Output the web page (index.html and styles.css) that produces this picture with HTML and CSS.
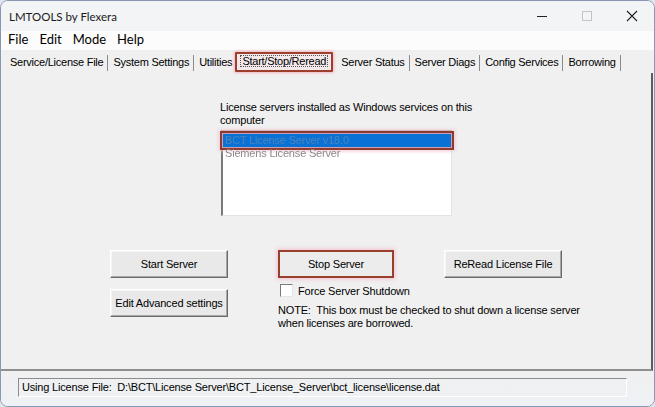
FILE: index.html
```html
<!DOCTYPE html>
<html>
<head>
<meta charset="utf-8">
<title>LMTOOLS by Flexera</title>
<link rel="stylesheet" href="styles.css">
</head>
<body>
<div class="window">
  <div class="titlebar">
    <span class="title">LMTOOLS by Flexera</span>
    <div class="controls">
      <span class="ctl"><svg width="12" height="12" viewBox="0 0 12 12"><path d="M1 6.5H11" stroke="#222" stroke-width="1"/></svg></span>
      <span class="ctl"><svg width="12" height="12" viewBox="0 0 12 12"><rect x="1.5" y="1.5" width="9" height="9" fill="none" stroke="#c4c4c4" stroke-width="1"/></svg></span>
      <span class="ctl"><svg width="12" height="12" viewBox="0 0 12 12"><path d="M1 1L11 11M11 1L1 11" stroke="#222" stroke-width="1.1"/></svg></span>
    </div>
  </div>
  <div class="menubar">
    <span class="menu">File</span>
    <span class="menu">Edit</span>
    <span class="menu">Mode</span>
    <span class="menu">Help</span>
  </div>
  <div class="tabs">
    <span class="tab">Service/License File</span>
    <span class="tab">System Settings</span>
    <span class="tab">Utilities</span>
    <span class="tab active"><span class="focus">Start/Stop/Reread</span></span>
    <span class="tab">Server Status</span>
    <span class="tab">Server Diags</span>
    <span class="tab">Config Services</span>
    <span class="tab">Borrowing</span>
  </div>
  <div class="pane">
    <div class="services">
      <div class="label">License servers installed as Windows services on this<br>computer</div>
      <div class="listbox">
        <div class="item selected"><span class="blur">BCT License Server v18.0</span></div>
        <div class="item"><span class="blur">Siemens License Server</span></div>
      </div>
    </div>
    <div class="actions">
      <button class="btn">Start Server</button>
      <button class="btn marked">Stop Server</button>
      <button class="btn">ReRead License File</button>
      <button class="btn second">Edit Advanced settings</button>
      <div class="shutdown">
        <label class="check"><span class="box"></span>Force Server Shutdown</label>
        <p class="note">NOTE:&nbsp; This box must be checked to shut down a license server<br>when licenses are borrowed.</p>
      </div>
    </div>
  </div>
  <div class="statusbar">
    <div class="status">Using License File:&nbsp; D:\BCT\License Server\BCT_License_Server\bct_license\license.dat</div>
  </div>
</div>
</body>
</html>
```
FILE: styles.css
```css
html, body {
  margin: 0;
  padding: 0;
  background: #dfe6ef;
}
.window {
  width: 653px;
  height: 405px;
  border: 1px solid #8898b4;
  border-radius: 8px;
  overflow: hidden;
  background: #f0f0f0;
  display: flex;
  flex-direction: column;
  font-family: "Liberation Sans", Arial, sans-serif;
  font-size: 11px;
  letter-spacing: -0.18px;
  color: #000;
}
.titlebar {
  height: 30px;
  background: #f3f4f6;
  display: flex;
  align-items: center;
  justify-content: space-between;
  font-family: Lato, "Noto Sans", sans-serif;
  letter-spacing: 0;
}
.title {
  font-size: 11.5px;
  padding-left: 8px;
  color: #1a1a1a;
}
.controls {
  display: flex;
  height: 100%;
}
.ctl {
  width: 45px;
  display: flex;
  align-items: center;
  justify-content: center;
}
.menubar {
  height: 19px;
  line-height: 16px;
  background: #fcfcfc;
  display: flex;
  align-items: flex-start;
  padding-left: 7px;
  font-family: Lato, "Noto Sans", sans-serif;
  font-size: 13px;
  letter-spacing: 0;
}
.menu {
  margin-right: 11px;
}
.tabs {
  height: 21px;
  display: flex;
  align-items: flex-end;
  padding-left: 4px;
  padding-top: 2px;
}
.tab {
  height: 16px;
  line-height: 15px;
  padding: 0 4px 0 5px;
  border-right: 1px solid #8a8a8a;
  margin-bottom: 2px;
  white-space: nowrap;
  letter-spacing: -0.25px;
}
.tab.active {
  border: 2px solid #9c3f2c;
  border-radius: 1px;
  box-shadow: 0 0 3px 1px #f2b6c4;
  background: #f3e8ea;
  padding: 0 3px;
  height: 16px;
  margin: 0 3px 1px -2px;
}
.focus {
  outline: 1px dotted #555;
  outline-offset: -1px;
  padding: 0 2px;
}
.pane {
  flex: 1;
  border-right: 2px solid #5c5c5c;
  border-bottom: 2px solid #8f8f8f;
  margin-right: 1px;
  display: flex;
  flex-direction: column;
  padding-top: 28px;
}
.services {
  margin-left: 219px;
  width: 260px;
}
.label {
  line-height: 13px;
  white-space: nowrap;
}
.listbox {
  margin-top: 3px;
  margin-left: 1px;
  width: 228px;
  height: 81px;
  background: #fff;
  border-left: 2px solid #7a7a7a;
  border-top: 1px solid #a0a0a0;
  border-right: 1px solid #e3e3e3;
  border-bottom: 1px solid #e3e3e3;
  padding-top: 3px;
}
.item {
  height: 13px;
  line-height: 13px;
  padding-left: 2px;
  color: #8a8a8a;
}
.item.selected {
  background: #0a72d4;
  color: #4b83bd;
  outline: 2px solid #8e3a2e;
  outline-offset: 1px;
  box-shadow: 0 0 0 3px #c9a0b8, 0 0 4px 4px #f2c5d2;
  width: 226px;
}
.blur {
  filter: blur(0.5px);
}
.actions {
  margin-top: 34px;
  margin-left: 109px;
  display: grid;
  grid-template-columns: 118px 116px 118px;
  column-gap: 50px;
  align-items: start;
}
.btn {
  height: 28px;
  font-family: "Liberation Sans", Arial, sans-serif;
  font-size: 11px;
  letter-spacing: -0.18px;
  color: #000;
  background: #e9e9e9;
  border: 1px solid;
  border-color: #ffffff #6a6a6a #6a6a6a #ffffff;
  box-shadow: inset -1px -1px 0 #a8a8a8, inset 1px 1px 0 #f6f6f6;
  padding: 0;
}
.btn.marked {
  border: 2px solid #9a3f2c;
  box-shadow: 0 0 4px 1px #f4bfd0;
  background: #ececec;
}
.btn.second {
  margin-top: 11px;
}
.shutdown {
  grid-column: 2 / span 2;
  margin-top: 6px;
}
.check {
  display: flex;
  align-items: center;
  margin-left: 2px;
  height: 13px;
}
.box {
  width: 11px;
  height: 11px;
  background: #fff;
  border: 1px solid;
  border-color: #7a7a7a #e6e6e6 #e6e6e6 #7a7a7a;
  margin-right: 5px;
}
.note {
  margin: 7px 0 0 0;
  line-height: 13px;
  white-space: nowrap;
}
.statusbar {
  height: 35px;
  display: flex;
  align-items: center;
  padding-left: 17px;
  background: linear-gradient(#f0f0f0, #eef1f5);
}
.status {
  width: 604px;
  height: 17px;
  line-height: 17px;
  border: 1px solid;
  border-color: #8c8c8c #ffffff #ffffff #8c8c8c;
  padding-left: 3px;
  white-space: nowrap;
  margin-top: -3px;
}
```
